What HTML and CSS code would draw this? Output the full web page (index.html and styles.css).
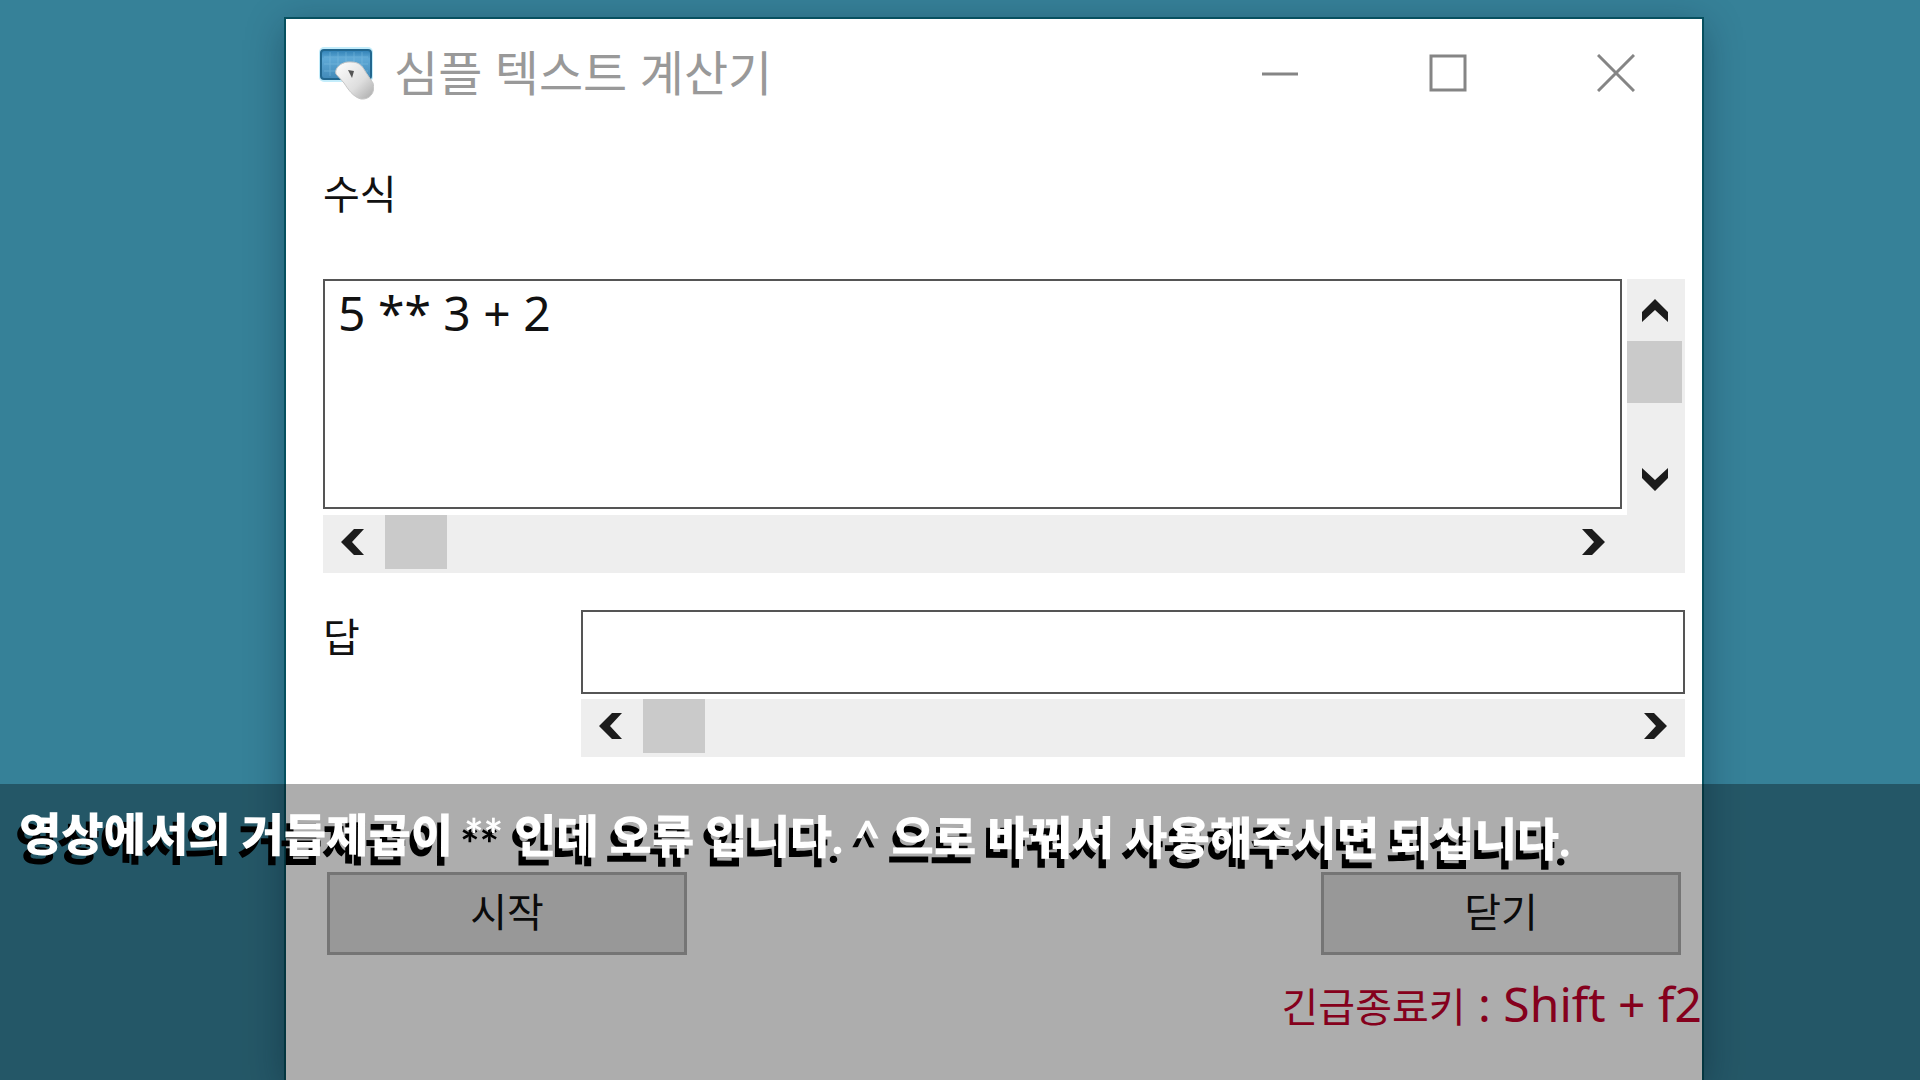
FILE: index.html
```
<!DOCTYPE html>
<html lang="ko">
<head>
    <meta charset="UTF-8">
    <meta name="viewport" content="width=device-width, initial-scale=1.0">
    <title>심플 텍스트 계산기</title>
    <link rel="stylesheet" href="styles.css">
</head>
<body>
    <main class="window">
        <header class="title-bar">
            <svg class="app-icon" viewBox="0 0 56 54" aria-hidden="true">
                <defs>
                    <linearGradient id="keys" x1="0" y1="0" x2="0" y2="1">
                        <stop offset="0" stop-color="#2f7fb4"/>
                        <stop offset="0.3" stop-color="#5fa9d6"/>
                        <stop offset="1" stop-color="#4189b8"/>
                    </linearGradient>
                    <linearGradient id="mouse" x1="0" y1="0" x2="1" y2="1">
                        <stop offset="0" stop-color="#ffffff"/>
                        <stop offset="0.6" stop-color="#dedede"/>
                        <stop offset="1" stop-color="#a9a9a9"/>
                    </linearGradient>
                </defs>
                <rect x="1" y="1" width="54" height="35" rx="5" fill="#c4edfb"/>
                <rect x="3" y="4" width="50" height="29" rx="3" fill="url(#keys)" stroke="#22678f" stroke-width="2"/>
                <path d="M6 11H50M6 18H50M6 25H50M12 6V30M20 6V30M28 6V30M36 6V30M44 6V30" stroke="#8cc8e8" stroke-width="1" opacity="0.4"/>
                <path d="M18 28C16 22 24 15 33 16C40 16 44 19 47 25L55 37C58 47 51 54 43 53C35 51 30 43 26 37Z" fill="url(#mouse)" stroke="#c6c6c6"/>
                <path d="M30 24L36 25L34 32Z" fill="#555"/>
            </svg>
            <h1>심플 텍스트 계산기</h1>
            <div class="window-buttons">
                <button type="button" aria-label="최소화">
                    <svg viewBox="0 0 38 38"><path d="M1 20H37"/></svg>
                </button>
                <button type="button" aria-label="최대화">
                    <svg viewBox="0 0 38 38"><path d="M2 2H36V36H2Z"/></svg>
                </button>
                <button type="button" aria-label="창 닫기">
                    <svg viewBox="0 0 38 38"><path d="M1 1L37 37M37 1L1 37"/></svg>
                </button>
            </div>
        </header>

        <form class="calculator">
            <label class="formula-label" for="formula">수식</label>
            <div class="editor">
                <textarea id="formula" spellcheck="false">5 ** 3 + 2</textarea>
                <div class="scrollbar vertical">
                    <button type="button" aria-label="위로">
                        <svg viewBox="0 0 28 28"><path d="M14 3L27 16V26L14 14L1 26V16Z"/></svg>
                    </button>
                    <div class="thumb"></div>
                    <button type="button" class="last" aria-label="아래로">
                        <svg viewBox="0 0 28 28"><path d="M14 25L27 12V2L14 14L1 2V12Z"/></svg>
                    </button>
                </div>
                <div class="scrollbar">
                    <button type="button" aria-label="왼쪽으로">
                        <svg viewBox="0 0 28 28"><path d="M3 14L16 1H26L14 14L26 27H16Z"/></svg>
                    </button>
                    <div class="thumb"></div>
                    <button type="button" class="last" aria-label="오른쪽으로">
                        <svg viewBox="0 0 28 28"><path d="M25 14L12 1H2L14 14L2 27H12Z"/></svg>
                    </button>
                </div>
                <div class="corner"></div>
            </div>

            <div class="answer">
                <label for="result">답</label>
                <div class="answer-field">
                    <input type="text" id="result">
                    <div class="scrollbar">
                        <button type="button" aria-label="왼쪽으로">
                            <svg viewBox="0 0 28 28"><path d="M3 14L16 1H26L14 14L26 27H16Z"/></svg>
                        </button>
                        <div class="thumb"></div>
                        <button type="button" class="last" aria-label="오른쪽으로">
                            <svg viewBox="0 0 28 28"><path d="M25 14L12 1H2L14 14L2 27H12Z"/></svg>
                        </button>
                    </div>
                </div>
            </div>

            <div class="button-group">
                <button type="button">시작</button>
                <button type="button">닫기</button>
            </div>
            <p class="hotkey">긴급종료키<span class="keys"> : Shift + f2</span></p>
        </form>
    </main>

    <div class="caption">
        <p>영상에서의 거듭제곱이 <span class="symbol">**</span> 인데 오류 입니다. <span class="symbol">^</span> 으로 바꿔서 사용해주시면 되십니다.</p>
    </div>
</body>
</html>
```
FILE: styles.css
```
* {
    box-sizing: border-box;
}
body {
    margin: 0;
    height: 100vh;
    display: flex;
    overflow: hidden;
    background-color: #368198;
    font-family: "Noto Sans", "Noto Sans CJK KR", sans-serif;
    font-size: 40px;
    line-height: 54px;
    color: #111;
}
button, input, textarea {
    font: inherit;
    color: inherit;
    margin: 0;
    padding: 0;
    border: none;
    border-radius: 0;
}

/* window */
.window {
    flex: 1;
    margin: 19px 218px 0 286px;
    background-color: #fff;
    box-shadow: 0 0 0 2px #07505f, 0 8px 36px rgba(0, 20, 40, 0.36);
}
.title-bar {
    display: flex;
    align-items: center;
    height: 108px;
    padding: 0 2px 0 32px;
}
.app-icon {
    width: 56px;
    height: 54px;
    margin-right: 20px;
}
.title-bar h1 {
    flex: 1;
    margin: 0;
    font-size: 48px;
    font-weight: 400;
    color: #999;
}
.window-buttons {
    display: flex;
}
.window-buttons button {
    display: flex;
    align-items: center;
    justify-content: center;
    width: 168px;
    height: 108px;
    background: none;
}
.window-buttons svg {
    width: 38px;
    height: 38px;
    fill: none;
    stroke: #858585;
    stroke-width: 3;
}

/* form */
.calculator {
    padding: 40px 17px 0 37px;
}
.formula-label {
    display: block;
    margin-bottom: 58px;
}
.editor {
    display: grid;
    grid-template-columns: 1fr 58px;
    grid-template-rows: 230px 58px;
    row-gap: 6px;
}
.editor textarea {
    margin-right: 5px;
    padding: 5px 13px;
    resize: none;
    font-size: 48px;
}
.editor textarea, .answer input {
    border: 2px solid #555;
    outline: none;
    background-color: #fff;
}
.corner {
    background-color: #eee;
}

/* scrollbars */
.scrollbar {
    display: flex;
    height: 58px;
    padding-bottom: 4px;
    background-color: #eee;
}
.scrollbar button {
    display: flex;
    align-items: center;
    justify-content: center;
    width: 62px;
    background: none;
}
.scrollbar svg {
    width: 28px;
    height: 28px;
    margin-right: 4px;
    fill: #1c1c1c;
}
.scrollbar .thumb {
    width: 62px;
    background-color: #cacaca;
}
.scrollbar .last {
    margin-left: auto;
}
.scrollbar.vertical {
    flex-direction: column;
    height: 236px;
    padding: 0 3px 0 0;
}
.vertical button {
    width: 55px;
    height: 62px;
}
.vertical svg {
    margin: 0;
}
.vertical .thumb {
    width: 55px;
    height: 62px;
}
.vertical .last {
    margin: auto 0 4px;
}

/* answer */
.answer {
    display: grid;
    grid-template-columns: 258px 1fr;
    margin-top: 37px;
}
.answer-field {
    display: flex;
    flex-direction: column;
    gap: 5px;
}
.answer input {
    width: 100%;
    height: 84px;
    padding: 0 13px;
    font-size: 48px;
}
.answer .last {
    width: 54px;
}

.button-group {
    display: flex;
    justify-content: space-between;
    margin-top: 115px;
    padding: 0 4px;
}
.button-group button {
    width: 360px;
    height: 83px;
    padding-bottom: 4px;
    border: 3px solid #adadad;
    background-color: #e1e1e1;
}
.hotkey {
    margin: 22px -17px 0 0;
    text-align: right;
    white-space: nowrap;
    color: #c4002b;
}
.hotkey .keys {
    font-size: 48px;
}

/* subtitle laid over the desktop */
.caption {
    position: fixed;
    left: 0;
    right: 0;
    bottom: 0;
    height: 296px;
    padding: 23px 19px;
    background-color: rgba(0, 0, 0, 0.32);
}
.caption p {
    margin: 0;
    font-family: Lato, "Noto Sans CJK KR", sans-serif;
    font-size: 46px;
    font-weight: 900;
    color: #fff;
    white-space: nowrap;
    text-shadow: -4px 9px 0 #000;
    transform: rotate(0.2deg);
    transform-origin: left center;
}
.caption .symbol {
    font-weight: 700;
}
```
